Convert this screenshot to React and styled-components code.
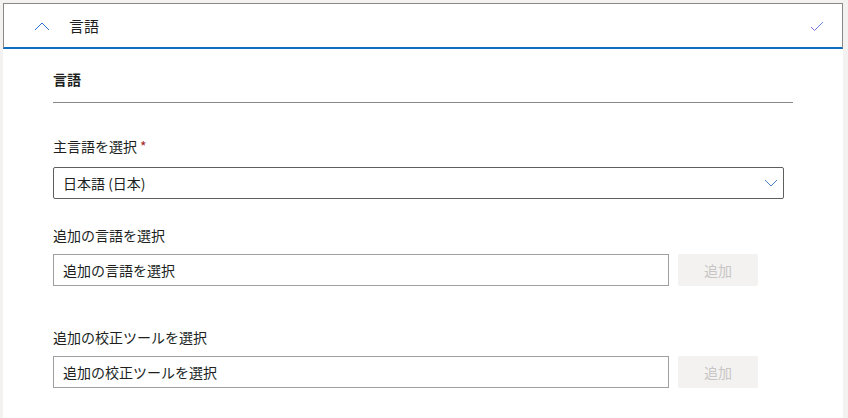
import styled, { createGlobalStyle } from "styled-components";

const Global = createGlobalStyle`
  html, body { margin: 0; padding: 0; background: #f3f2f1; }
  body {
    font-family: "Noto Sans CJK JP", "Noto Sans", sans-serif;
    font-size: 14px;
    color: #201f1e;
  }
`;

const Page = styled.div`
  padding: 3px 5px 0 3px;
`;

const Card = styled.div`
  background: #fff;
  width: 840px;
  height: 415px;
`;

const Header = styled.div`
  display: flex;
  align-items: center;
  height: 43px;
  border: 1px solid #8a8886;
  border-bottom: 2px solid #106ebe;
  padding: 0 18px 0 30px;
`;

const Title = styled.div`
  flex: 1;
  font-size: 15px;
  margin-left: 19px;
  color: #201f1e;
`;

const Body = styled.div`
  padding: 20px 0 0 50px;
  width: 740px;
`;

const SectionTitle = styled.div`
  font-weight: 700;
  font-size: 14px;
  line-height: 20px;
  color: #201f1e;
  padding-bottom: 13px;
  border-bottom: 1px solid #8a8886;
`;

const Field = styled.div`
  margin-top: ${(p) => p.$top}px;
`;

const Label = styled.div`
  font-size: 14px;
  line-height: 20px;
  margin-bottom: ${(p) => p.$gap || 9}px;
  color: #201f1e;
`;

const Star = styled.span`
  color: #a4262c;
  margin-left: 3px;
`;

const Dropdown = styled.div`
  display: flex;
  align-items: center;
  justify-content: space-between;
  width: 731px;
  height: 32px;
  box-sizing: border-box;
  border: 1px solid #605e5c;
  border-radius: 2px;
  padding: 0 5px 0 9px;
`;

const Row = styled.div`
  display: flex;
  gap: 9px;
`;

const Input = styled.div`
  display: flex;
  align-items: center;
  width: 616px;
  height: 32px;
  box-sizing: border-box;
  border: 1px solid #a19f9d;
  padding: 0 9px;
`;

const AddButton = styled.div`
  display: flex;
  align-items: center;
  justify-content: center;
  width: 80px;
  height: 32px;
  border-radius: 2px;
  background: #f3f2f1;
  color: #c8c6c4;
  font-size: 14px;
`;

const Up = () => (
  <svg width="16" height="10" viewBox="0 0 16 10">
    <path d="M1 9 L8 2 L15 9" fill="none" stroke="#2b6fd6" strokeWidth="1" />
  </svg>
);

const Check = () => (
  <svg width="14" height="12" viewBox="0 0 14 12">
    <defs>
      <linearGradient id="g" x1="0" x2="1" y1="0" y2="0">
        <stop offset="0" stopColor="#8a5fd6" />
        <stop offset="1" stopColor="#5b8de8" />
      </linearGradient>
    </defs>
    <path d="M1 7 L4.5 10.5 L13 2" fill="none" stroke="url(#g)" strokeWidth="1" />
  </svg>
);

const Down = () => (
  <svg width="14" height="9" viewBox="0 0 14 9">
    <path d="M1 1 L7 7 L13 1" fill="none" stroke="#4a7fc9" strokeWidth="1" />
  </svg>
);

export default function App() {
  return (
    <Page>
      <Global />
      <Card>
        <Header>
          <Up />
          <Title>言語</Title>
          <Check />
        </Header>
        <Body>
          <SectionTitle>言語</SectionTitle>
          <Field $top={33}>
            <Label $gap={11}>
              主言語を選択<Star>*</Star>
            </Label>
            <Dropdown>
              <span>日本語 (日本)</span>
              <Down />
            </Dropdown>
          </Field>
          <Field $top={26}>
            <Label>追加の言語を選択</Label>
            <Row>
              <Input>追加の言語を選択</Input>
              <AddButton>追加</AddButton>
            </Row>
          </Field>
          <Field $top={41}>
            <Label>追加の校正ツールを選択</Label>
            <Row>
              <Input>追加の校正ツールを選択</Input>
              <AddButton>追加</AddButton>
            </Row>
          </Field>
        </Body>
      </Card>
    </Page>
  );
}
